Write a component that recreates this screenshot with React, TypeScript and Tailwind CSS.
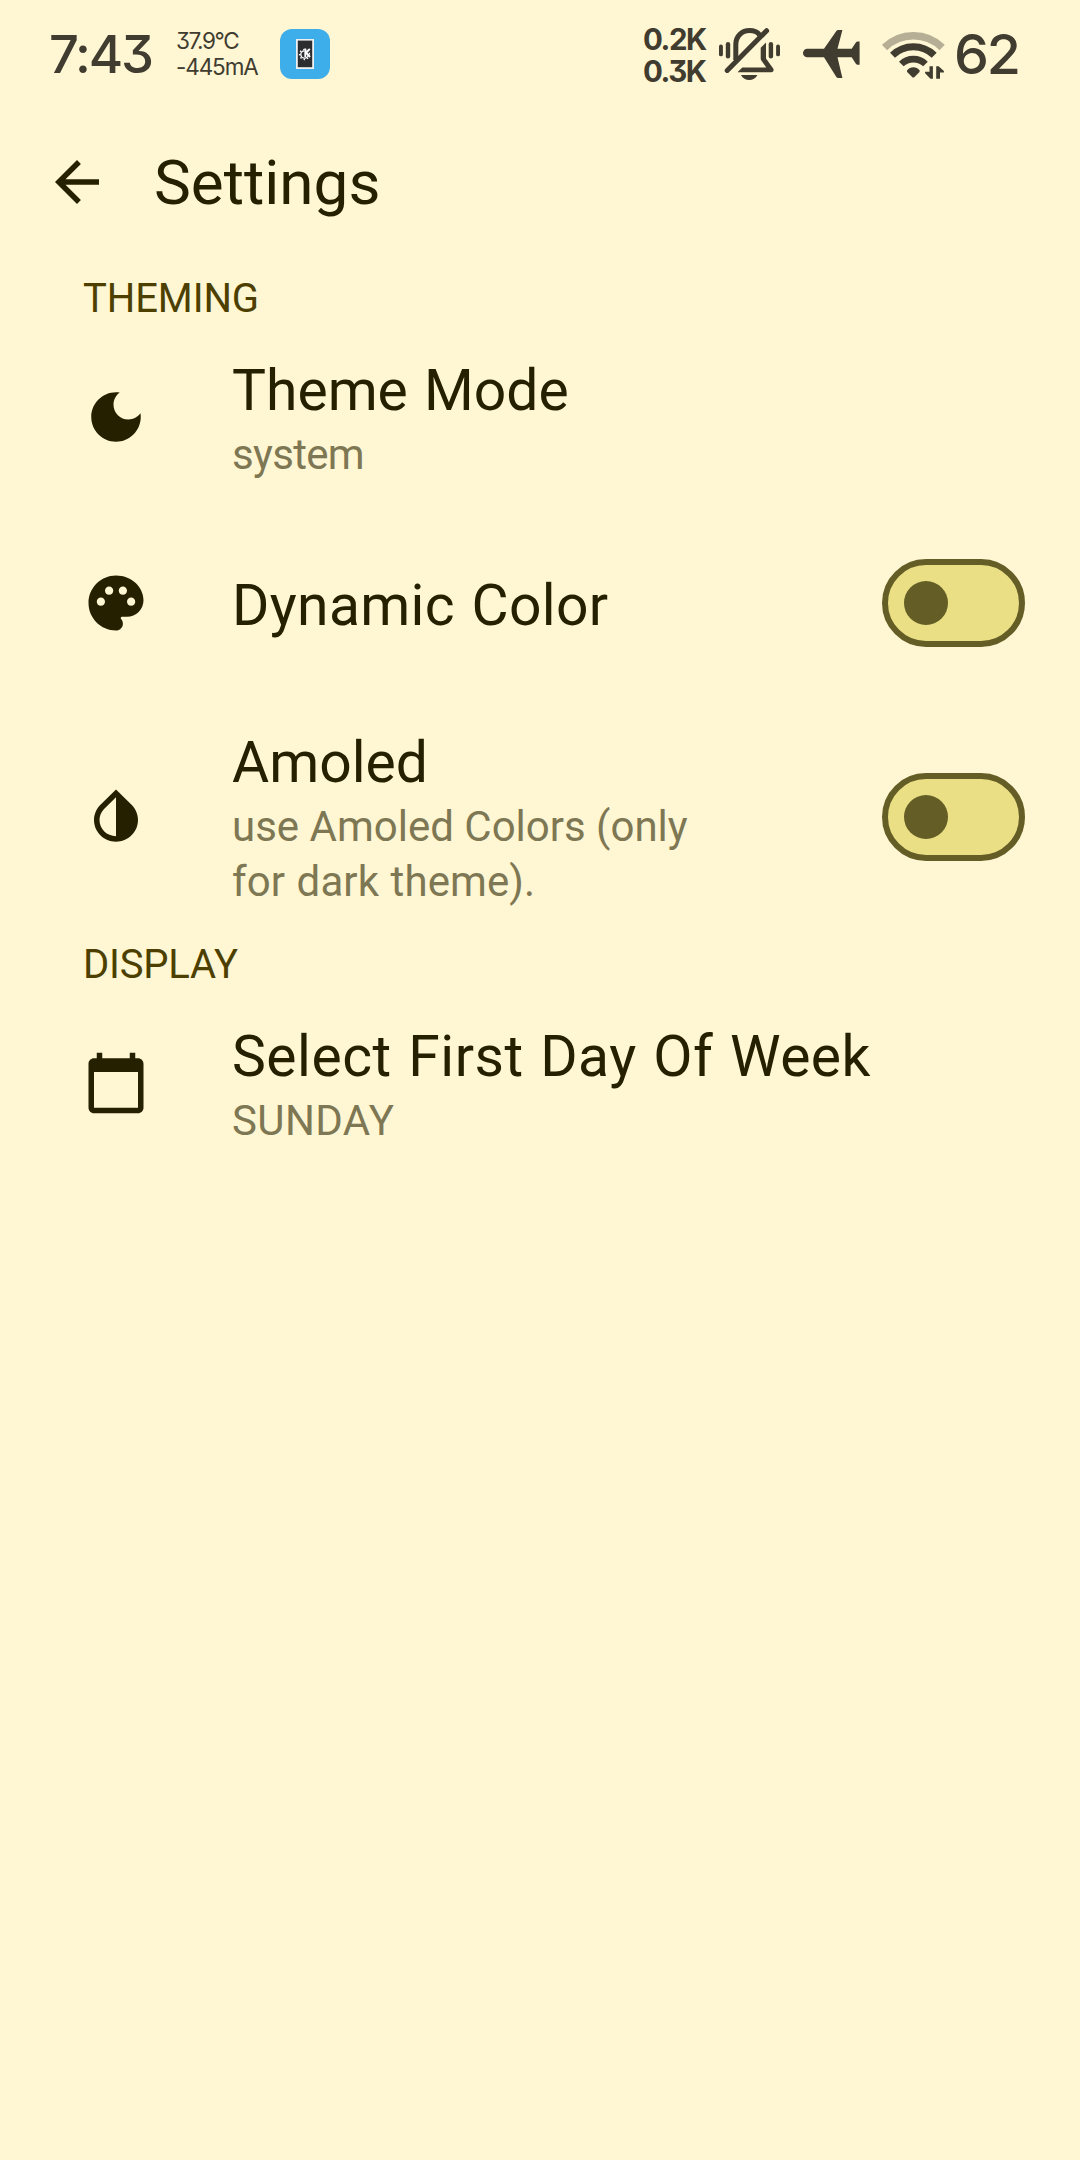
import type { ReactNode } from 'react';

function MaterialIcon({ d, className = '' }: { d: string; className?: string }) {
  return (
    <svg viewBox="0 0 24 24" className={`h-[66px] w-[66px] shrink-0 fill-[#252000] ${className}`}>
      <path d={d} />
    </svg>
  );
}

const ARROW_BACK = 'M20 11H7.83l5.59-5.59L12 4l-8 8 8 8 1.41-1.41L7.83 13H20v-2z';
const DARK_MODE =
  'M12 3c-4.97 0-9 4.03-9 9s4.03 9 9 9 9-4.03 9-9c0-.46-.04-.92-.1-1.36-.98 1.37-2.58 2.26-4.4 2.26-2.98 0-5.4-2.42-5.4-5.4 0-1.81.89-3.42 2.26-4.4-.44-.06-.9-.1-1.36-.1z';
const PALETTE =
  'M12 2C6.49 2 2 6.49 2 12s4.49 10 10 10c1.38 0 2.5-1.12 2.5-2.5 0-.61-.23-1.2-.64-1.67-.08-.1-.13-.21-.13-.33 0-.28.22-.5.5-.5H16c3.31 0 6-2.69 6-6 0-4.96-4.49-9-10-9zm5.5 11c-.83 0-1.5-.67-1.5-1.5s.67-1.5 1.5-1.5 1.5.67 1.5 1.5-.67 1.5-1.5 1.5zm-3-4c-.83 0-1.5-.67-1.5-1.5S13.67 6 14.5 6s1.5.67 1.5 1.5S15.33 9 14.5 9zM5 11.5c0-.83.67-1.5 1.5-1.5s1.5.67 1.5 1.5S7.33 13 6.5 13 5 12.33 5 11.5zm6-4c0 .83-.67 1.5-1.5 1.5S8 8.33 8 7.5 8.67 6 9.5 6s1.5.67 1.5 1.5z';
const INVERT_COLORS =
  'M12 4.81V19c-3.31 0-6-2.63-6-5.87 0-1.56.62-3.03 1.75-4.14L12 4.81M6.35 7.56C4.9 8.99 4 10.96 4 13.13 4 17.48 7.58 21 12 21s8-3.52 8-7.87c0-2.17-.9-4.14-2.35-5.57L12 2 6.35 7.56z';
const CALENDAR =
  'M20 3h-1V1h-2v2H7V1H5v2H4c-1.1 0-2 .9-2 2v16c0 1.1.9 2 2 2h16c1.1 0 2-.9 2-2V5c0-1.1-.9-2-2-2zm0 18H4V8h16v13z';

function ConnectIcon() {
  return (
    <svg viewBox="280 29 50 50" className="ml-[22px] h-[50px] w-[50px] shrink-0">
      <rect x="280" y="29" width="50" height="50" rx="12" fill="#3daee9" />
      <rect x="296" y="39" width="18" height="30" fill="#eff0f1" />
      <rect x="297.8" y="40.6" width="14.4" height="26.600" fill="#2b2d2f" />
      <circle cx="304.5" cy="54.5" r="3.7" fill="none" stroke="#fff" strokeWidth="1.3" strokeDasharray="17.4 5.8" transform="rotate(-10 304.5 54.5)" />
      <circle cx="304.5" cy="54.5" r="5" fill="none" stroke="#fff" strokeWidth="1.3" strokeDasharray="1.4 2.2" />
      <path d="M305.300 48.500v8.500M309.800 48.800l-3.600 4 3.800 4.400" fill="none" stroke="#fff" strokeWidth="1.9" />
    </svg>
  );
}

function MutedBell() {
  return (
    <svg viewBox="716 24 68 62" className="ml-[10px] h-[62px] w-[68px] shrink-0">
      <g fill="none" stroke="#403c30" strokeWidth="5" strokeLinejoin="round">
        <path d="M735.8 61V45.500C735.8 37 742 31.600 749.600 31.600c4.200 0 7.600 1.400 10 4.200" />
        <path d="M727.200 71.400L766.600 31.700" strokeLinecap="round" />
      </g>
      <g fill="#403c30">
        <path d="M760.700 48.800L766 43.600V59.500L773.200 69.600C774.200 71.200 773.400 73.300 771.300 73.300H737.500L742.300 68.600H766.300L761.500 61.800Q760.700 60.700 760.700 59.500Z" />
        <rect x="719" y="45.600" width="3.900" height="11.700" rx="1.900" />
        <rect x="725.800" y="43" width="4.400" height="16.400" rx="2.200" />
        <rect x="768.700" y="43" width="4.400" height="16.400" rx="2.200" />
        <rect x="776.100" y="45.600" width="3.900" height="11.700" rx="1.900" />
        <path d="M741 76h16.400c-1.600 3.200-4.800 5-8.200 5s-6.600-1.800-8.200-5z" />
      </g>
    </svg>
  );
}

function Airplane() {
  return (
    <svg viewBox="802 24 60 60" className="ml-[18px] h-[60px] w-[60px] shrink-0 fill-[#403c30]">
      <path d="M807.300 48.700H824L836.200 31.200q.7-1.200 2-1.200h4.200L837.500 48.700h14.200l4-6q.8-1.200 2-1.200h1.900v23.200h-1.900q-1.200 0-2-1.200l-4-6.200H837.500l4.900 20.700h-4.200q-1.300 0-2-1.200L824 57.300h-16.700a4.300 4.300 0 0 1 0-8.600z" />
    </svg>
  );
}

function Wifi() {
  return (
    <svg viewBox="880 24 68 60" className="ml-[18px] h-[60px] w-[68px] shrink-0">
      <g fill="none" stroke="#403c30">
        <path d="M884.500 47.500A41.200 41.200 0 0 1 942.200 47.500" strokeWidth="7.400" opacity=".38" />
        <path d="M892.500 55.200A29.800 29.800 0 0 1 934.200 55.200" strokeWidth="7" />
        <path d="M901.300 64A17.400 17.400 0 0 1 925.500 64" strokeWidth="6.600" />
      </g>
      <g fill="#403c30">
        <path d="M907 70.500c3.400-4.200 9.300-4.200 12.700 0l-.2 1.500-5 5q-1.200 1-2.400 0l-5-5z" />
        <path d="M929.500 66.300h3.400v12.400h-2.400l-5.400-5.400v-1.500h4.400zM936.200 78.700V66.300h2.400l5.300 4.600v1.600H940v6.200z" />
      </g>
    </svg>
  );
}

function StatusBar() {
  return (
    <header className="flex h-[110px] shrink-0 items-center justify-between pl-[49px] font-['Inter'] text-[#403c30] [font-feature-settings:'cv09']">
      <div className="flex h-[108px] w-[290px] items-center self-start whitespace-nowrap">
        <div className="w-[126px] shrink-0 text-[52.5px] font-medium leading-[60px] tracking-[-2.200px]">7:43</div>
        <div className="w-[83px] shrink-0 pl-px text-[22.5px] leading-[26px]">
          <div className="tracking-[-1.400px]">37.9°C</div>
          <div className="tracking-[-1.100px]">-445mA</div>
        </div>
        <ConnectIcon />
      </div>
      <div className="flex h-[108px] w-[437px] items-center self-start whitespace-nowrap">
        <div className="w-[63px] shrink-0 pt-0.5 text-[29.5px] font-bold leading-[32px] tracking-[-1.500px]">
          <div>0.2K</div>
          <div>0.3K</div>
        </div>
        <MutedBell />
        <Airplane />
        <Wifi />
        <div className="ml-[6px] text-[55.5px] font-medium leading-[60px] tracking-[-2.200px]">62</div>
      </div>
    </header>
  );
}

function Toggle() {
  return (
    <button className="mr-[55px] mb-px ml-auto flex h-[88px] w-[143px] shrink-0 items-center rounded-full border-[6px] border-[#645d25] bg-[#eadf85] pl-4">
      <span className="h-11 w-11 rounded-full bg-[#645d25]" />
    </button>
  );
}

function SectionLabel({ children, className }: { children: string; className: string }) {
  return <h2 className={`pl-[83px] text-[40px] leading-[56px] text-[#4c3f00] ${className}`}>{children}</h2>;
}

type RowProps = {
  icon: string;
  iconClass: string;
  title: string;
  titleClass: string;
  children?: ReactNode;
  toggle?: boolean;
  className: string;
};

function Row({ icon, iconClass, title, titleClass, children, toggle, className }: RowProps) {
  return (
    <div className={`flex items-center pl-[83px] ${className}`}>
      <MaterialIcon d={icon} className={iconClass} />
      <div className="ml-[83px] whitespace-nowrap">
        <div className={`text-[57px] leading-[73px] text-[#252000] ${titleClass}`}>{title}</div>
        {children && <div className="text-[42px] leading-[55px] text-[#7e7753]">{children}</div>}
      </div>
      {toggle && <Toggle />}
    </div>
  );
}

export default function App() {
  return (
    <div className="flex h-[2160px] w-[1080px] flex-col overflow-hidden bg-[#fff6d3] font-['Roboto',sans-serif]">
      <StatusBar />
      <div className="flex h-36 shrink-0 items-center pl-11">
        <MaterialIcon d={ARROW_BACK} />
        <h1 className="ml-11 pt-0.5 text-[62px] leading-[80px] text-[#252000]">Settings</h1>
      </div>

      <SectionLabel className="mt-[17px] tracking-[-0.100px]">THEMING</SectionLabel>
      <Row className="mt-[27px]" icon={DARK_MODE} iconClass="mb-0.5" title="Theme Mode" titleClass="[word-spacing:2px]">
        <span className="tracking-[-0.700px]">system</span>
      </Row>
      <Row className="mt-[85px] h-[73px]" icon={PALETTE} iconClass="mb-px" title="Dynamic Color" titleClass="pt-[3px] leading-[72px] tracking-[0.350px] [word-spacing:2px]" toggle />
      <Row className="mt-[86px]" icon={INVERT_COLORS} iconClass="mb-px" title="Amoled" titleClass="" toggle>
        <div>use Amoled Colors (only</div>
        <div className="tracking-[0.100px] [word-spacing:1px]">for dark theme).</div>
      </Row>

      <SectionLabel className="mt-7 tracking-[-0.200px]">DISPLAY</SectionLabel>
      <Row className="mt-[27px]" icon={CALENDAR} iconClass="mb-0.5" title="Select First Day Of Week" titleClass="tracking-[0.500px] [word-spacing:2px]">
        <span className="tracking-[0.400px]">SUNDAY</span>
      </Row>
    </div>
  );
}
